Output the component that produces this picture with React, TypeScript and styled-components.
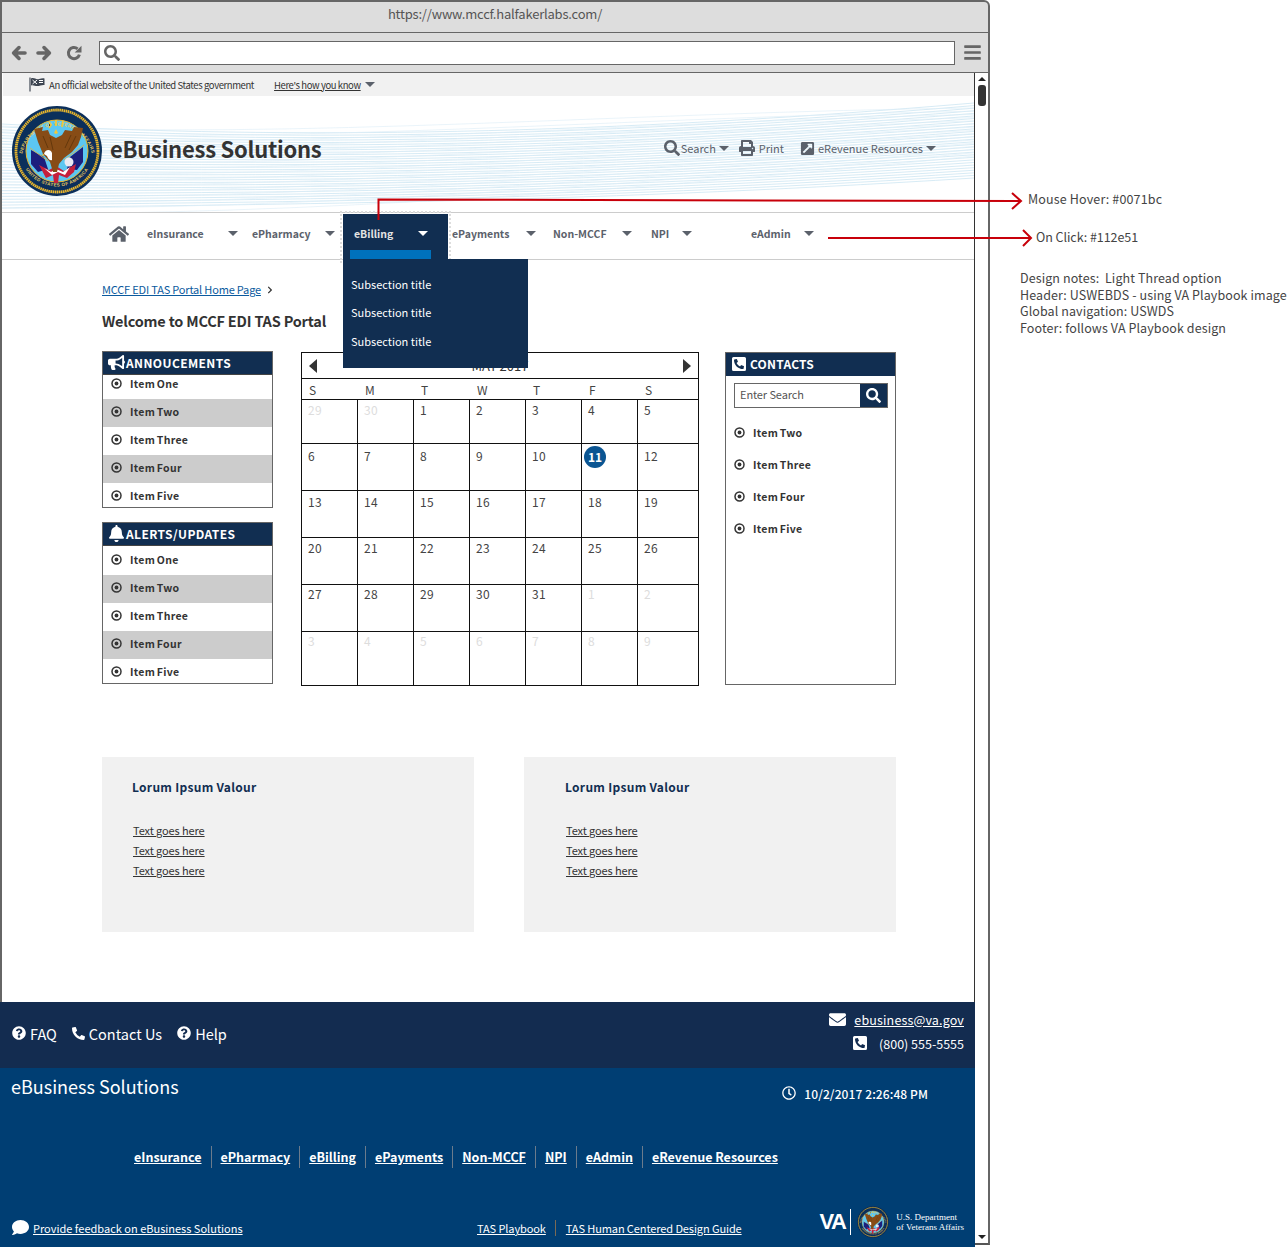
import styled, { createGlobalStyle } from 'styled-components';
import {
  FaBars,
  FaBell,
  FaBullhorn,
  FaChevronRight,
  FaComment,
  FaEnvelope,
  FaExternalLinkSquareAlt,
  FaHome,
  FaPhoneAlt,
  FaPhoneSquareAlt,
  FaPrint,
  FaQuestionCircle,
  FaRegClock,
  FaSearch,
} from 'react-icons/fa';

const NAVY = '#112e51';
const FONT = `'Noto Sans CJK SC', 'Noto Sans', sans-serif`;

const GlobalStyle = createGlobalStyle`
  html, body {
    margin: 0;
    padding: 0;
    background: #fff;
  }
  body {
    font-family: ${FONT};
    overflow: hidden;
  }
  * {
    box-sizing: border-box;
  }
`;

const navItems = [
  { label: 'eInsurance', width: 91, after: 14 },
  { label: 'ePharmacy', width: 83, after: 8 },
  { label: 'eBilling', width: 105, after: 4, active: true },
  { label: 'ePayments', width: 84, after: 17 },
  { label: 'Non-MCCF', width: 79, after: 19 },
  { label: 'NPI', width: 41, after: 59 },
  { label: 'eAdmin', width: 63, after: 0 },
];

const footerLinks = ['eInsurance', 'ePharmacy', 'eBilling', 'ePayments', 'Non-MCCF', 'NPI', 'eAdmin', 'eRevenue Resources'];
const items = ['Item One', 'Item Two', 'Item Three', 'Item Four', 'Item Five'];
const weekDays = ['S', 'M', 'T', 'W', 'T', 'F', 'S'];
const weeks = [
  { height: 44, pad: 1, days: [29, 30, 1, 2, 3, 4, 5] },
  { height: 47, pad: 3, days: [6, 7, 8, 9, 10, 11, 12] },
  { height: 47, pad: 2, days: [13, 14, 15, 16, 17, 18, 19] },
  { height: 47, pad: 1, days: [20, 21, 22, 23, 24, 25, 26] },
  { height: 47, pad: 0, days: [27, 28, 29, 30, 31, 1, 2] },
  { height: 53, pad: 0, days: [3, 4, 5, 6, 7, 8, 9] },
];

// the thread lines behind the header
const lerp = (a: number, b: number, t: number) => a + (b - a) * t;
const threadLines = Array.from({ length: 30 }, (_, i) => {
  const t = i / 29;
  const y0 = lerp(28, 112, t);
  const y1 = lerp(40, 106, t);
  const y2 = lerp(34, 100, t);
  const y3 = lerp(7, 82, t);
  return `M0 ${y0} C 250 ${y1 + 2}, 560 ${y2 + 8}, 972 ${y3}`;
});
const threadLinesB = Array.from({ length: 16 }, (_, i) => {
  const t = i / 15;
  return `M0 ${lerp(30, 118, t)} C 300 ${lerp(44, 118, t)}, 620 ${lerp(16, 96, t)}, 972 ${lerp(12, 60, t)}`;
});

const Seal = ({ size, id }: { size: number; id: string }) => (
  <svg width={size} height={size} viewBox="0 0 90 90">
    <circle cx="45" cy="45" r="45" fill="#0b2f5b" />
    <circle cx="45" cy="45" r="41" fill="none" stroke="#e9b62c" strokeWidth="2.8" strokeDasharray="1.6 .5" />
    <circle cx="45" cy="45" r="31" fill="#5cc7f2" stroke="#e9b62c" strokeWidth="1" />
    <defs>
      <path id={`${id}Top`} d="M9.5 55 A35.5 35.5 0 1 1 80.5 55" />
      <path id={`${id}Bottom`} d="M9 52 A37 37 0 0 0 81 52" />
    </defs>
    <text fontSize="4.5" fontWeight="700" fill="#e9c75c" fontFamily="'Liberation Sans', sans-serif" letterSpacing=".4">
      <textPath href={`#${id}Top`} startOffset="50%" textAnchor="middle">DEPARTMENT OF VETERANS AFFAIRS</textPath>
    </text>
    <text fontSize="4.5" fontWeight="700" fill="#e9c75c" fontFamily="'Liberation Sans', sans-serif" letterSpacing=".4">
      <textPath href={`#${id}Bottom`} startOffset="50%" textAnchor="middle">UNITED STATES OF AMERICA</textPath>
    </text>
    <path d="M19 44 L32 51 L36 63 L26 66 L19 58 Z" fill="#1c1f7c" />
    <path d="M71 41 L58 51 L55 63 L65 64 L71 56 Z" fill="#1c1f7c" />
    <path d="M18 42 L36 55 M72 39 L52 54" stroke="#d8b24a" strokeWidth=".9" />
    <path d="M27 59 L37 64 L44 60 L52 65 L64 58 L62 66 L55 72 L47 69 L46 77 L42 77 L41 69 L34 72 Z" fill="#c5203c" />
    <path d="M32 62 L39 66 L44 63 L51 66 L58 61 L53 69 L46 66 L40 69 Z" fill="#fff" />
    <path d="M22 23 L31 21 L30 25 L36 24 L38 29 L44 32 L50 29 L53 24 L60 25 L62 21 L71 22 L69 31 L66 39 L60 46 L52 52 L47 58 L45 66 L41 66 L38 56 L31 48 L26 36 Z" fill="#874c16" />
    <path d="M31 30 L36 42 M38 31 L41 44 M59 29 L53 42 M64 30 L57 44" stroke="#5c3209" strokeWidth=".8" />
    <path d="M32 48 C33 43 39 43 40 47 L40 54 C37 55 36 52 35 50 Z" fill="#fff" />
    <path d="M32 48 L29 49 L32 50 Z" fill="#e9b62c" />
    <circle cx="57" cy="56" r="4.5" fill="#e9e9f2" />
    <path d="M37 16 L39 19 L37 22 M44 14 L44 20 M51 15 L50 21" stroke="#f2c83a" strokeWidth="1.8" />
    <path d="M44 23 L46 27 L44 28 L42 27 Z" fill="#f2c83a" />
  </svg>
);

const FlagIcon = () => (
  <svg width="16" height="15" viewBox="0 0 16 15">
    <path d="M1 0.5 V14.5" stroke="#5b616b" strokeWidth="1.4" />
    <path d="M2 1.5 C5 0 7 3 10 2 C12 1.5 14 1 15.5 1.5 V8 C13 7.5 11 9 8 9 C6 9 4 7.5 2 8.5 Z" fill="#3d4551" />
    <path d="M3.5 3 L8 7 M8 3 L3.5 7 M10 3.5 H14 M10 5.5 H14" stroke="#fff" strokeWidth="1" />
  </svg>
);

const ArrowIcon = ({ flip }: { flip?: boolean }) => (
  <svg width="16" height="16" viewBox="0 0 16 16" style={flip ? { transform: 'scaleX(-1)' } : undefined}>
    <path d="M14 8 H3 M8 2.6 L2.6 8 L8 13.4" fill="none" stroke="#666" strokeWidth="3.6" strokeLinecap="round" strokeLinejoin="round" />
  </svg>
);

const ReloadIcon = () => (
  <svg width="16" height="16" viewBox="0 0 16 16">
    <path d="M13.4 9.6 A5.6 5.6 0 1 1 11.6 3.8" fill="none" stroke="#666" strokeWidth="3" />
    <path d="M15.5 0.8 V7.6 H8.7 Z" fill="#666" />
  </svg>
);

const DotIcon = () => (
  <svg width="11" height="11" viewBox="0 0 11 11">
    <circle cx="5.5" cy="5.5" r="4.5" fill="none" stroke="#333" strokeWidth="1.5" />
    <circle cx="5.5" cy="5.5" r="1.9" fill="#333" />
  </svg>
);

export default function App() {
  return (
    <>
      <GlobalStyle />
      <Canvas>
        <Browser>
          <TitleBar>https://www.mccf.halfakerlabs.com/</TitleBar>
          <Toolbar>
            <ToolIcon $gap={9}><ArrowIcon /></ToolIcon>
            <ToolIcon $gap={14}><ArrowIcon flip /></ToolIcon>
            <ToolIcon $gap={17}><ReloadIcon /></ToolIcon>
            <AddressBar><FaSearch /></AddressBar>
            <MenuIcon><FaBars /></MenuIcon>
          </Toolbar>
          <Viewport>
            <Site>
              <GovBanner>
                <FlagIcon />
                <span>An official website of the United States government</span>
                <GovLink>Here's how you know</GovLink>
                <Caret $color="#5b616b" />
              </GovBanner>
              <Header>
                <Threads viewBox="0 0 972 116" preserveAspectRatio="none">
                  {threadLines.map((d) => (
                    <path key={d} d={d} fill="none" stroke="#c6e3f1" strokeWidth="0.7" />
                  ))}
                  {threadLinesB.map((d) => (
                    <path key={d} d={d} fill="none" stroke="#dcedf6" strokeWidth="0.6" />
                  ))}
                </Threads>
                <SealSlot><Seal size={90} id="sealHeader" /></SealSlot>
                <SiteTitle>eBusiness Solutions</SiteTitle>
                <HeaderTools>
                  <HeaderTool $after={10} $gap={1} $caretGap={2}>
                    <FaSearch size={16} color="#5b616b" />
                    <span>Search</span>
                    <Caret $color="#5b616b" />
                  </HeaderTool>
                  <HeaderTool $after={16} $gap={4} $caretGap={0}>
                    <FaPrint size={16} color="#5b616b" />
                    <span>Print</span>
                  </HeaderTool>
                  <HeaderTool $after={0} $gap={3} $caretGap={0}>
                    <FaExternalLinkSquareAlt size={15} color="#5b616b" />
                    <span>eRevenue Resources</span>
                    <Caret $color="#5b616b" />
                  </HeaderTool>
                </HeaderTools>
              </Header>
              <Nav>
                <HomeLink><FaHome /></HomeLink>
                {navItems.map((item) => (
                  <NavItem key={item.label} $width={item.width} $after={item.after} $active={item.active}>
                    <span>{item.label}</span>
                    <Caret $color={item.active ? '#fff' : '#5b616b'} />
                    {item.active && (
                      <>
                        <ActiveBar />
                        <Dropdown>
                          <div>Subsection title</div>
                          <div>Subsection title</div>
                          <div>Subsection title</div>
                        </Dropdown>
                      </>
                    )}
                  </NavItem>
                ))}
              </Nav>
              <Main>
                <Breadcrumb>
                  <a>MCCF EDI TAS Portal Home Page</a>
                  <FaChevronRight size={8} color="#333" />
                </Breadcrumb>
                <Welcome>Welcome to MCCF EDI TAS Portal</Welcome>
                <Columns>
                  <LeftColumn>
                    <Panel>
                      <PanelHead><FaBullhorn size={17} />ANNOUCEMENTS</PanelHead>
                      <ItemList items={items} tight />
                    </Panel>
                    <Panel>
                      <PanelHead><FaBell size={17} />ALERTS/UPDATES</PanelHead>
                      <ItemList items={items} />
                    </Panel>
                  </LeftColumn>
                  <Calendar>
                    <CalendarHead>
                      <Triangle $dir="left" />
                      <span>MAY 2017</span>
                      <Triangle $dir="right" />
                    </CalendarHead>
                    <WeekDays>
                      {weekDays.map((d, i) => <span key={i}>{d}</span>)}
                    </WeekDays>
                    {weeks.map((week, w) => (
                      <Week key={w} $height={week.height}>
                        {week.days.map((day, i) => {
                          const muted = (w === 0 && i < 2) || (w === 4 && i > 4) || w === 5;
                          return (
                            <Day key={i} $muted={muted} $pad={week.pad}>
                              {day === 11 && w === 1 ? <Today>11</Today> : day}
                            </Day>
                          );
                        })}
                      </Week>
                    ))}
                  </Calendar>
                  <Contacts>
                    <ContactsHead><FaPhoneSquareAlt size={16} />CONTACTS</ContactsHead>
                    <SearchBox>
                      <span>Enter Search</span>
                      <SearchButton><FaSearch size={15} /></SearchButton>
                    </SearchBox>
                    {items.slice(1).map((item) => (
                      <ContactItem key={item}>
                        <DotIcon />
                        <span>{item}</span>
                      </ContactItem>
                    ))}
                  </Contacts>
                </Columns>
                <Cards>
                  {[30, 41].map((inset) => (
                    <Card key={inset} $inset={inset}>
                      <CardTitle>Lorum Ipsum Valour</CardTitle>
                      <a>Text goes here</a>
                      <a>Text goes here</a>
                      <a>Text goes here</a>
                    </Card>
                  ))}
                </Cards>
              </Main>
              <FooterTop>
                <FooterHelp>
                  <span><FaQuestionCircle size={14} />FAQ</span>
                  <span><FaPhoneAlt size={13} />Contact Us</span>
                  <span><FaQuestionCircle size={14} />Help</span>
                </FooterHelp>
                <FooterContact>
                  <div>
                    <FaEnvelope size={17} />
                    <a>ebusiness@va.gov</a>
                  </div>
                  <div>
                    <FaPhoneSquareAlt size={16} />
                    <FooterPhone>(800) 555-5555</FooterPhone>
                  </div>
                </FooterContact>
              </FooterTop>
              <FooterMain>
                <FooterRow>
                  <FooterTitle>eBusiness Solutions</FooterTitle>
                  <FooterClock><FaRegClock size={14} />10/2/2017 2:26:48 PM</FooterClock>
                </FooterRow>
                <FooterNav>
                  {footerLinks.map((link) => <a key={link}>{link}</a>)}
                </FooterNav>
                <FooterBottom>
                  <Feedback>
                    <FaComment size={17} />
                    <a>Provide feedback on eBusiness Solutions</a>
                  </Feedback>
                  <Guides>
                    <a>TAS Playbook</a>
                    <a>TAS Human Centered Design Guide</a>
                  </Guides>
                  <VaLogo>
                    <strong>VA</strong>
                    <Seal size={32} id="sealFooter" />
                    <span>U.S. Department<br />of Veterans Affairs</span>
                  </VaLogo>
                </FooterBottom>
              </FooterMain>
            </Site>
            <Scrollbar>
              <ScrollArrow $up />
              <ScrollThumb />
              <ScrollArrow />
            </Scrollbar>
          </Viewport>
        </Browser>
        <Notes>
          <NoteLabel $top={191} $left={38} $spacing={0.15}>Mouse Hover: #0071bc</NoteLabel>
          <NoteLabel $top={21} $left={46} $spacing={-0.05}>On Click: #112e51</NoteLabel>
          <DesignNotes>
            <div>Design notes:&nbsp; Light Thread option</div>
            <div>Header: USWEBDS - using VA Playbook image</div>
            <div>Global navigation: USWDS</div>
            <div>Footer: follows VA Playbook design</div>
          </DesignNotes>
        </Notes>
        <Annotations width="1288" height="260" viewBox="0 0 1288 260">
          <path d="M378.5 220 V199.5 L1020 201" fill="none" stroke="#c8000a" strokeWidth="2" />
          <path d="M1012 193 L1021 201 L1012 209" fill="none" stroke="#c8000a" strokeWidth="2" />
          <path d="M828 238 H1030" fill="none" stroke="#c8000a" strokeWidth="2" />
          <path d="M1023 230 L1031 238 L1023 246" fill="none" stroke="#c8000a" strokeWidth="2" />
        </Annotations>
      </Canvas>
    </>
  );
}

const ItemList = ({ items, tight }: { items: string[]; tight?: boolean }) => (
  <>
    {items.map((item, i) => {
      const first = i === 0;
      const last = i === items.length - 1;
      return (
        <Item
          key={item}
          $shaded={i % 2 === 1}
          $height={first ? (tight ? 24 : 29) : last ? 24 : 28}
          $lift={first ? (tight ? 8 : 2) : last ? 0 : 4}
        >
          <DotIcon />
          <span>{item}</span>
        </Item>
      );
    })}
  </>
);

const Canvas = styled.div`
  position: relative;
  width: 1288px;
  height: 1247px;
  display: flex;
  overflow: hidden;
`;

const Annotations = styled.svg`
  position: absolute;
  top: 0;
  left: 0;
  pointer-events: none;
`;

const Browser = styled.div`
  width: 990px;
  height: 1247px;
  display: flex;
  flex-direction: column;
  flex-shrink: 0;
`;

const TitleBar = styled.div`
  height: 33px;
  background: #ddd;
  border: 2px solid #666;
  border-bottom: 1px solid #666;
  border-top-right-radius: 6px;
  color: #555;
  font-size: 13px;
  letter-spacing: -0.2px;
  line-height: 24px;
  text-align: center;
`;

const Toolbar = styled.div`
  height: 40px;
  background: #ddd;
  border-left: 2px solid #666;
  border-right: 2px solid #666;
  border-bottom: 1px solid #666;
  display: flex;
  align-items: center;
  padding-left: 9px;
  color: #666;
`;

const ToolIcon = styled.div<{ $gap: number }>`
  width: 16px;
  height: 16px;
  margin-right: ${({ $gap }) => $gap}px;
  display: flex;
`;

const AddressBar = styled.div`
  width: 856px;
  height: 24px;
  margin-top: 1px;
  background: #fff;
  border: 1px solid #666;
  font-size: 16px;
  padding: 3px 0 0 4px;
  display: flex;
  color: #666;
`;

const MenuIcon = styled.div`
  margin-left: 8px;
  font-size: 19px;
  display: flex;
  color: #666;
`;

const Viewport = styled.div`
  flex: 1;
  display: flex;
  min-height: 0;
`;

const Site = styled.div`
  width: 974px;
  border-left: 2px solid #666;
  display: flex;
  flex-direction: column;
`;

const GovBanner = styled.div`
  height: 23px;
  margin-left: 1px;
  background: #f1f1f1;
  display: flex;
  align-items: center;
  padding-left: 26px;
  font-size: 9.5px;
  letter-spacing: -0.4px;
  color: #333;

  svg {
    margin-right: 4px;
  }
`;

const GovLink = styled.a`
  margin: 0 4px 0 20px;
  text-decoration: underline;
`;

const Caret = styled.i<{ $color: string }>`
  display: inline-block;
  width: 0;
  height: 0;
  flex-shrink: 0;
  border-left: 5px solid transparent;
  border-right: 5px solid transparent;
  border-top: 5px solid ${({ $color }) => $color};
`;

const Header = styled.div`
  position: relative;
  height: 116px;
  display: flex;
  align-items: center;
  padding: 0 38px 6px 10px;
`;

const Threads = styled.svg`
  position: absolute;
  left: 0;
  top: 0;
  width: 100%;
  height: 100%;
`;

const SealSlot = styled.div`
  position: relative;
  height: 90px;
`;

const SiteTitle = styled.h1`
  position: relative;
  margin: 0 0 6px 8px;
  font-size: 22px;
  font-weight: 600;
  letter-spacing: -0.25px;
  color: #333;
  white-space: nowrap;
`;

const HeaderTools = styled.div`
  position: relative;
  margin: 0 0 6px auto;
  display: flex;
  color: #5b616b;
  font-size: 11px;
`;

const HeaderTool = styled.div<{ $after: number; $gap: number; $caretGap: number }>`
  display: flex;
  align-items: center;
  gap: ${({ $gap }) => $gap}px;
  margin-right: ${({ $after }) => $after}px;

  i {
    margin-left: ${({ $caretGap }) => $caretGap}px;
  }
`;

const Nav = styled.div`
  height: 48px;
  border-top: 1px solid #ccc;
  border-bottom: 1px solid #ccc;
  display: flex;
  align-items: stretch;
  padding-left: 107px;
`;

const HomeLink = styled.div`
  width: 24px;
  margin-right: 14px;
  padding-bottom: 5px;
  color: #5b616b;
  font-size: 20px;
  display: flex;
  align-items: center;
`;

const NavItem = styled.div<{ $width: number; $after: number; $active?: boolean }>`
  position: relative;
  width: ${({ $width }) => $width}px;
  margin-right: ${({ $after }) => $after}px;
  display: flex;
  align-items: center;
  justify-content: space-between;
  font-size: 10.5px;
  font-weight: 700;
  color: #5b616b;
  padding-bottom: 6px;

  ${({ $active }) =>
    $active &&
    `
    margin-top: 1px;
    margin-bottom: -1px;
    background: ${NAVY};
    color: #e4e4e4;
    padding: 0 20px 8px 11px;
    outline: 2px dotted #ddd;
    outline-offset: 1px;
  `}
`;

const ActiveBar = styled.div`
  position: absolute;
  left: 7px;
  bottom: 0;
  width: 81px;
  height: 10px;
  background: #0071bc;
`;

const Dropdown = styled.div`
  position: absolute;
  z-index: 3;
  top: 45px;
  left: 0;
  width: 185px;
  height: 109px;
  background: ${NAVY};
  padding: 11px 8px 0;
  color: #fff;
  font-size: 11px;
  font-weight: 400;

  div {
    height: 28.4px;
    line-height: 28px;
  }
`;

const Main = styled.div`
  flex: 1;
  padding: 20px 0 0 100px;
`;

const Breadcrumb = styled.div`
  height: 17px;
  display: flex;
  align-items: center;
  gap: 5px;
  font-size: 11px;
  letter-spacing: -0.18px;

  a {
    color: #0b5a9e;
    text-decoration: underline;
  }

  svg {
    margin-top: 2px;
  }
`;

const Welcome = styled.h2`
  margin: 13px 0 0;
  height: 22px;
  font-size: 14.5px;
  line-height: 22px;
  font-weight: 600;
  letter-spacing: -0.2px;
  color: #333;
  white-space: nowrap;
`;

const Columns = styled.div`
  margin-top: 19px;
  display: flex;
  align-items: flex-start;
`;

const LeftColumn = styled.div`
  width: 171px;
  margin-right: 28px;
  display: flex;
  flex-direction: column;
  gap: 14px;
`;

const Panel = styled.div`
  border: 1px solid #666;
`;

const PanelHead = styled.div`
  height: 23px;
  background: ${NAVY};
  color: #fff;
  font-size: 12px;
  font-weight: 700;
  letter-spacing: 0.4px;
  display: flex;
  align-items: center;
  padding: 0 0 1px 5px;
  gap: 1px;
  border-bottom: 1px solid #444;
`;

const Item = styled.div<{ $shaded: boolean; $height: number; $lift: number }>`
  height: ${({ $height }) => $height}px;
  background: ${({ $shaded }) => ($shaded ? '#ccc' : '#fff')};
  display: flex;
  align-items: center;
  gap: 8px;
  padding: 0 0 ${({ $lift }) => $lift}px 8px;
  font-size: 10.5px;
  font-weight: 700;
  letter-spacing: 0.3px;
  word-spacing: -1px;
  color: #333;
`;

const Calendar = styled.div`
  width: 398px;
  margin-top: 1px;
  border: 1px solid #111;
`;

const CalendarHead = styled.div`
  height: 26px;
  border-bottom: 1px solid #111;
  display: flex;
  align-items: center;
  justify-content: space-between;
  padding: 0 7px;
  font-size: 13px;
  color: #333;
`;

const Triangle = styled.i<{ $dir: 'left' | 'right' }>`
  width: 0;
  height: 0;
  border-top: 7px solid transparent;
  border-bottom: 7px solid transparent;
  ${({ $dir }) => ($dir === 'left' ? 'border-right' : 'border-left')}: 8px solid #333;
`;

const WeekDays = styled.div`
  height: 21px;
  border-bottom: 1px solid #111;
  display: grid;
  grid-template-columns: repeat(6, 56px) 1fr;
  font-size: 12px;
  line-height: 22px;
  color: #444;

  span {
    padding-left: 7px;
  }
`;

const Week = styled.div<{ $height: number }>`
  height: ${({ $height }) => $height}px;
  display: grid;
  grid-template-columns: repeat(6, 56px) 1fr;
  border-bottom: 1px solid #111;

  &:last-child {
    border-bottom: 0;
  }
`;

const Day = styled.div<{ $muted: boolean; $pad: number }>`
  border-right: 1px solid #111;
  padding: ${({ $pad }) => $pad}px 0 0 6px;
  font-size: 12px;
  line-height: 18px;
  letter-spacing: 0.4px;
  color: ${({ $muted }) => ($muted ? '#ddd' : '#444')};

  &:last-child {
    border-right: 0;
  }
`;

const Today = styled.span`
  display: block;
  width: 22px;
  height: 22px;
  margin: -1px 0 0 -4px;
  border-radius: 50%;
  background: #0b5592;
  color: #fff;
  font-weight: 700;
  line-height: 21px;
  text-align: center;
  letter-spacing: 0;
`;

const Contacts = styled.div`
  width: 171px;
  height: 333px;
  margin: 1px 0 0 26px;
  border: 1px solid #666;
`;

const ContactsHead = styled.div`
  height: 23px;
  background: ${NAVY};
  color: #fff;
  font-size: 12px;
  font-weight: 700;
  letter-spacing: 0.2px;
  display: flex;
  align-items: center;
  gap: 3px;
  padding: 0 0 2px 5px;
`;

const SearchBox = styled.div`
  margin: 7px 7px 12px 8px;
  height: 25px;
  border: 1px solid #666;
  display: flex;
  align-items: center;
  justify-content: space-between;
  padding-left: 5px;
  font-size: 11px;
  letter-spacing: -0.1px;
  color: #555;

  span {
    margin-bottom: 3px;
  }
`;

const SearchButton = styled.div`
  width: 27px;
  height: 23px;
  background: ${NAVY};
  color: #fff;
  display: flex;
  align-items: center;
  justify-content: center;
`;

const ContactItem = styled.div`
  height: 32px;
  display: flex;
  align-items: center;
  gap: 8px;
  padding: 0 0 7px 8px;
  font-size: 10.5px;
  font-weight: 700;
  letter-spacing: 0.3px;
  word-spacing: -1px;
  color: #333;
`;

const Cards = styled.div`
  margin-top: 71px;
  display: flex;
  gap: 50px;
`;

const Card = styled.div<{ $inset: number }>`
  width: 372px;
  height: 175px;
  background: #f1f1f1;
  padding: 21px 0 0 ${({ $inset }) => $inset}px;
  display: flex;
  flex-direction: column;
  align-items: flex-start;

  a {
    height: 20px;
    line-height: 20px;
    margin-left: 1px;
    font-size: 11px;
    letter-spacing: -0.1px;
    color: #333;
    text-decoration: underline;
  }
`;

const CardTitle = styled.div`
  height: 34px;
  margin-bottom: 8px;
  font-size: 12px;
  font-weight: 700;
  line-height: 18px;
  letter-spacing: 0.3px;
  color: ${NAVY};
`;

const FooterTop = styled.div`
  position: relative;
  height: 66px;
  margin: 0 -1px 0 -2px;
  background: #132c50;
  display: flex;
  justify-content: space-between;
  padding: 0 11px 0 12px;
  color: #fff;
`;

const FooterHelp = styled.div`
  display: flex;
  align-items: center;
  gap: 15px;
  padding-bottom: 4px;
  font-size: 14.5px;

  span {
    display: flex;
    align-items: center;
    gap: 4px;
  }
`;

const FooterContact = styled.div`
  padding-top: 5px;
  font-size: 12.5px;
  letter-spacing: 0.15px;

  div {
    height: 24px;
    display: flex;
    align-items: center;
    justify-content: flex-end;
    gap: 8px;
  }

  div + div {
    gap: 11px;
  }

  a {
    text-decoration: underline;
  }
`;

const FooterPhone = styled.span`
  letter-spacing: 0;
`;

const FooterMain = styled.div`
  position: relative;
  height: 179px;
  margin: 0 -1px 0 -2px;
  background: #003e73;
  color: #fff;
  padding: 4px 11px 0;
  display: flex;
  flex-direction: column;
`;

const FooterRow = styled.div`
  display: flex;
  justify-content: space-between;
`;

const FooterTitle = styled.div`
  font-size: 18px;
  line-height: 28px;
`;

const FooterClock = styled.div`
  display: flex;
  align-items: center;
  gap: 8px;
  height: 28px;
  margin: 7px 36px 0 0;
  font-size: 12px;
  font-weight: 500;
  letter-spacing: 0.1px;
`;

const FooterNav = styled.div`
  margin: 39px 0 0 114px;
  height: 22px;
  display: flex;
  align-items: center;

  a {
    height: 22px;
    padding: 0 9px;
    border-right: 1px solid #6b7b8c;
    font-size: 12.5px;
    font-weight: 700;
    line-height: 21px;
    text-decoration: underline;
  }

  a:last-child {
    border: 0;
  }
`;

const FooterBottom = styled.div`
  margin-top: auto;
  height: 46px;
  display: flex;
  align-items: flex-end;
`;

const Feedback = styled.div`
  width: 456px;
  padding: 0 0 11px 1px;
  display: flex;
  align-items: center;
  gap: 4px;
  font-size: 11px;

  a {
    text-decoration: underline;
  }
`;

const Guides = styled.div`
  display: flex;
  padding-bottom: 11px;
  font-size: 11px;
  letter-spacing: -0.1px;

  a {
    padding: 0 9px 0 10px;
    text-decoration: underline;
  }

  a + a {
    border-left: 1px solid #7a6a55;
  }
`;

const VaLogo = styled.div`
  margin-left: auto;
  display: flex;
  align-items: center;
  height: 36px;
  margin-bottom: 7px;
  color: #fff;

  strong {
    font-family: 'Liberation Sans', sans-serif;
    font-size: 22px;
    letter-spacing: -1.5px;
    padding-right: 5px;
    margin-right: 6px;
    border-right: 1px solid #fff;
    line-height: 26px;
  }

  span {
    margin-left: 7px;
    font-family: 'Liberation Serif', serif;
    font-size: 9px;
    line-height: 10px;
    white-space: nowrap;
  }
`;

const Scrollbar = styled.div`
  width: 16px;
  height: 1172px;
  background: #fff;
  border-left: 1px solid #333;
  border-right: 2px solid #666;
  border-bottom: 2px solid #555;
  display: flex;
  flex-direction: column;
  align-items: center;
`;

const ScrollArrow = styled.i<{ $up?: boolean }>`
  width: 0;
  height: 0;
  border-left: 4px solid transparent;
  border-right: 4px solid transparent;
  ${({ $up }) =>
    $up
      ? 'border-bottom: 4px solid #222; margin-top: 4px;'
      : 'border-top: 4px solid #222; margin-top: auto; margin-bottom: 4px;'}
`;

const ScrollThumb = styled.div`
  width: 8px;
  height: 21px;
  margin-top: 4px;
  border-radius: 3px;
  background: #333;
`;

const Notes = styled.div`
  flex: 1;
  min-width: 0;
  font-size: 12.5px;
  color: #444;
  white-space: nowrap;
`;

const NoteLabel = styled.div<{ $top: number; $left: number; $spacing: number }>`
  margin: ${({ $top }) => $top}px 0 0 ${({ $left }) => $left}px;
  height: 17px;
  line-height: 15px;
  letter-spacing: ${({ $spacing }) => $spacing}px;
`;

const DesignNotes = styled.div`
  margin: 24px 0 0 30px;
  line-height: 16.7px;
  letter-spacing: 0.09px;
`;
